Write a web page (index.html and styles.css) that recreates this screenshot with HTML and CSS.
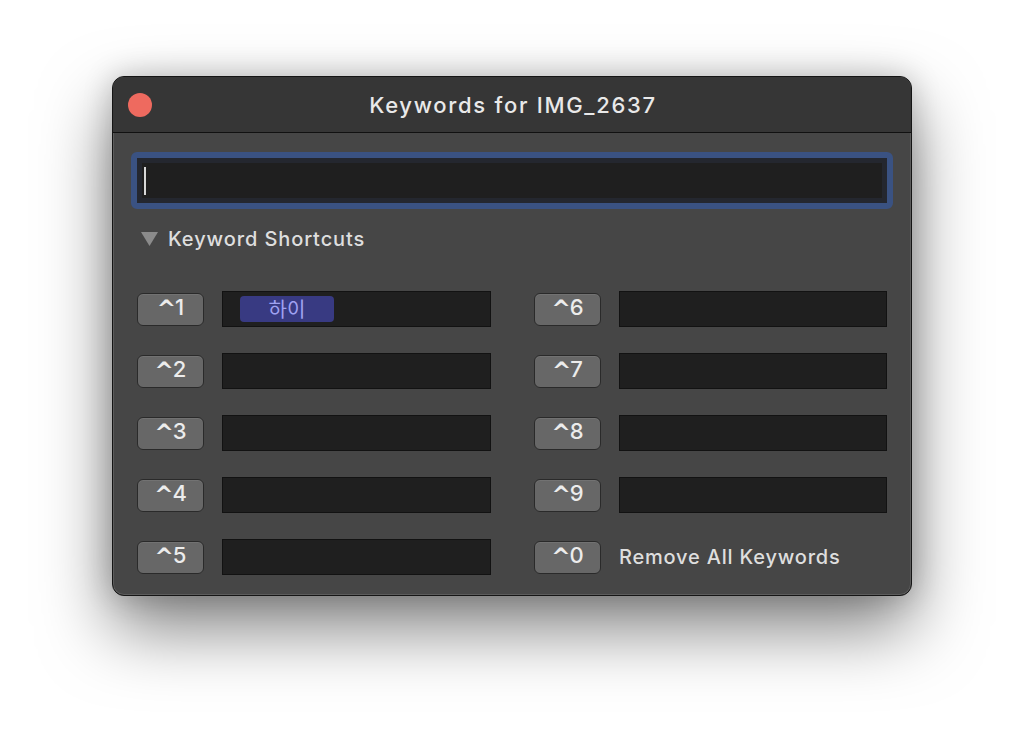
FILE: index.html
```html
<!DOCTYPE html>
<html>
<head>
<meta charset="utf-8">
<link rel="stylesheet" href="styles.css">
</head>
<body>
<div class="window">
  <div class="titlebar">
    <div class="lights"><span class="close"></span></div>
    <div class="title">Keywords for IMG_2637</div>
    <div></div>
  </div>
  <div class="content">
    <div class="search-ring">
      <div class="search-field"><span class="caret"></span></div>
    </div>
    <div class="disclosure">
      <svg class="tri" width="17" height="14" viewBox="0 0 17 14"><path d="M0 0 H17 L8.5 14 Z" fill="#8b8b8b"/></svg>
      <span>Keyword Shortcuts</span>
    </div>
    <div class="grid">
      <div class="cell"><div class="key"><span class="hat">^</span>1</div><div class="field"><span class="token">하이</span></div></div>
      <div class="cell"><div class="key"><span class="hat">^</span>6</div><div class="field"></div></div>
      <div class="cell"><div class="key"><span class="hat">^</span>2</div><div class="field"></div></div>
      <div class="cell"><div class="key"><span class="hat">^</span>7</div><div class="field"></div></div>
      <div class="cell"><div class="key"><span class="hat">^</span>3</div><div class="field"></div></div>
      <div class="cell"><div class="key"><span class="hat">^</span>8</div><div class="field"></div></div>
      <div class="cell"><div class="key"><span class="hat">^</span>4</div><div class="field"></div></div>
      <div class="cell"><div class="key"><span class="hat">^</span>9</div><div class="field"></div></div>
      <div class="cell"><div class="key"><span class="hat">^</span>5</div><div class="field"></div></div>
      <div class="cell"><div class="key"><span class="hat">^</span>0</div><div class="label">Remove All Keywords</div></div>
    </div>
  </div>
</div>
</body>
</html>
```
FILE: styles.css
```css
html, body {
  margin: 0;
  padding: 0;
  background: #ffffff;
}
body {
  padding-top: 76px;
  min-height: 744px;
  box-sizing: border-box;
  font-family: Inter, "Noto Sans", "Noto Sans CJK KR", sans-serif;
  overflow: hidden;
}
.window {
  width: 800px;
  height: 520px;
  box-sizing: border-box;
  margin: 0 0 0 112px;
  background: #464646;
  border: 1px solid #151515;
  border-radius: 12px;
  box-shadow: inset 0 0 0 1px rgba(255,255,255,0.12), 0 32px 70px rgba(0,0,0,0.5), 0 0 30px rgba(0,0,0,0.2);
  overflow: hidden;
}
.titlebar {
  height: 55px;
  background: #363636;
  border-bottom: 1px solid #111;
  display: grid;
  grid-template-columns: 1fr auto 1fr;
  align-items: center;
}
.lights {
  padding-left: 15px;
  display: flex;
}
.close {
  width: 24px;
  height: 24px;
  border-radius: 50%;
  background: #ee6a5f;
}
.title {
  color: #e9e9e9;
  font-size: 22px;
  font-weight: 500;
  letter-spacing: 1.7px;
  padding-left: 2px;
}
.content {
  padding: 19px 18px 0 18px;
}
.search-ring {
  height: 57px;
  box-sizing: border-box;
  border: 6px solid #3a5282;
  border-radius: 6px;
  background: #24272f;
  padding: 5px;
}
.search-field {
  height: 100%;
  background: #1f1f1f;
  display: flex;
  align-items: center;
  padding-left: 2px;
}
.caret {
  width: 2px;
  height: 28px;
  background: #d8d8d8;
}
.disclosure {
  margin-top: 18px;
  height: 24px;
  display: flex;
  align-items: center;
  gap: 10px;
  padding-left: 10px;
  color: #dedede;
  font-size: 20px;
  font-weight: 500;
  letter-spacing: 0.9px;
}
.grid {
  margin-top: 40px;
  padding-left: 6px;
  display: grid;
  grid-template-columns: 354px 353px;
  column-gap: 43px;
  row-gap: 26px;
}
.cell {
  display: flex;
  align-items: center;
  gap: 18px;
  height: 36px;
}
.key {
  width: 67px;
  height: 33px;
  box-sizing: border-box;
  flex: none;
  background: #676767;
  border: 1px solid #2a2a2a;
  border-radius: 6px;
  box-shadow: inset 0 1px 0 rgba(255,255,255,0.08);
  color: #ececec;
  font-size: 22px;
  font-weight: 500;
  display: flex;
  align-items: baseline;
  justify-content: center;
  padding-top: 0;
  line-height: 26px;
}
.hat {
  font-family: "DejaVu Sans", sans-serif;
  font-size: 23px;
  font-weight: 700;
  margin-right: -1px;
  position: relative;
  top: 2px;
}
.field {
  flex: 1;
  height: 36px;
  box-sizing: border-box;
  background: #1f1f1f;
  border: 1px solid #121212;
  display: flex;
  align-items: center;
  padding-left: 17px;
}
.token {
  width: 94px;
  height: 26px;
  border-radius: 4px;
  background: #383a82;
  color: #a0a2f2;
  font-family: "Noto Sans CJK KR", sans-serif;
  font-size: 20px;
  display: flex;
  align-items: center;
  justify-content: center;
  line-height: 1;
}
.label {
  color: #dedede;
  font-size: 20px;
  font-weight: 500;
  letter-spacing: 0.8px;
}
```
